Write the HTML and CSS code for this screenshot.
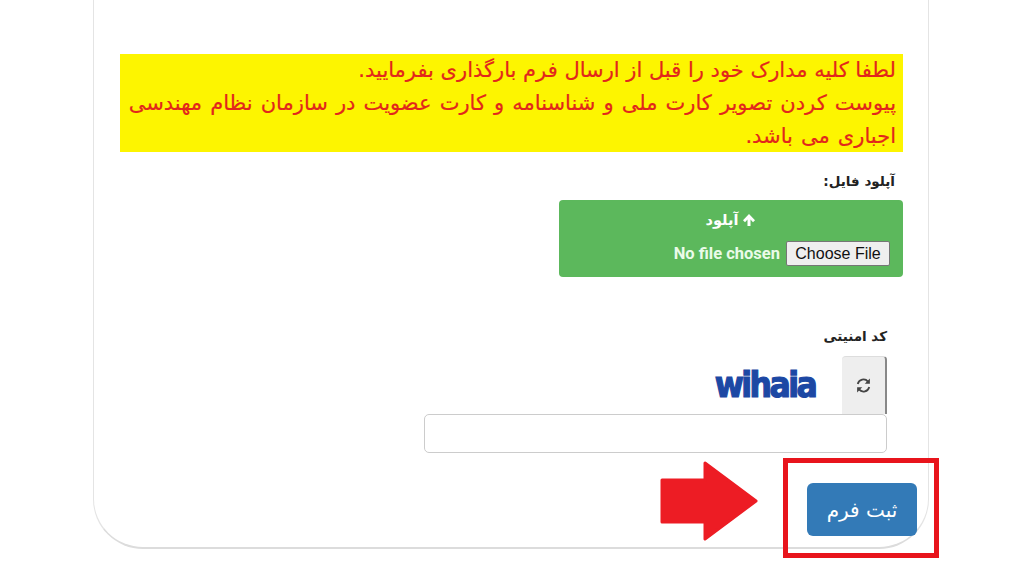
FILE: index.html
```html
<!DOCTYPE html>
<html lang="fa" dir="rtl">
<head>
<meta charset="utf-8">
<title>فرم</title>
<link rel="stylesheet" href="styles.css">
</head>
<body>
<main class="card">
  <p class="notice"><span class="notice-first">لطفا کلیه مدارک خود را قبل از ارسال فرم بارگذاری بفرمایید.</span><br><span class="notice-second">پیوست کردن تصویر کارت ملی و شناسنامه و کارت عضویت در سازمان نظام مهندسی اجباری می باشد.</span></p>
  <label class="label upload-label">آپلود فایل:</label>
  <div class="upload">
    <div class="upload-title"><svg class="up" viewBox="0 0 14 14"><path d="M7 1 13 7.2 11 9.2 8.5 6.6V13h-3V6.600L3 9.2 1 7.2Z"/></svg><span>آپلود</span></div>
    <div class="upload-row" dir="ltr"><span class="nofile">No file chosen</span><button class="choose" type="button">Choose File</button></div>
  </div>
  <div class="captcha-block">
    <label class="label captcha-label">کد امنیتی</label>
    <div class="captcha-row">
      <button class="refresh" type="button" aria-label="refresh"><svg viewBox="0 0 16 16"><g fill="none" stroke="#444" stroke-width="1.7"><path d="M2.6 6.6A5.5 5.5 0 0 1 12.2 4.3"/><path d="M13.4 9.4A5.5 5.5 0 0 1 3.8 11.700"/></g><path d="M14 1.500V6.300H9.200Z" fill="#444"/><path d="M2 14.500V9.700H6.800Z" fill="#444"/></svg></button>
      <div class="captcha-img" dir="ltr">wihaia</div>
    </div>
    <input class="captcha-input" type="text">
  </div>
  <div class="actions"><button class="submit" type="button">ثبت فرم</button></div>
</main>
<svg class="arrow" viewBox="0 0 100 82"><path d="M3 20H46V3L97 41 46 79V62H3Z" fill="#ed1c24" stroke="#ed1c24" stroke-width="3" stroke-linejoin="round"/></svg>
<div class="highlight"></div>
</body>
</html>
```
FILE: styles.css
```css
* { box-sizing: border-box; }
html, body { margin: 0; height: 573px; overflow: hidden; background: #fff; }
body { position: relative; font-family: "DejaVu Sans", sans-serif; }
.card {
  width: 836px;
  height: 549px;
  margin-right: 95px;
  padding: 54px 25px 0 26px;
  background: #fff;
  border: 1px solid #e4e4e4;
  border-top: 0;
  border-bottom: 2px solid #dcdcdc;
  border-radius: 0 0 50px 50px;
}
.notice {
  margin: 0;
  height: 98px;
  padding: 0 7px 0 4px;
  background: #fdf500;
  color: #e2261c;
  font-size: 21px;
  line-height: 33px;
  -webkit-text-stroke: 0.2px #e2261c;
}
.notice-first { word-spacing: 0; }
.notice-second { word-spacing: 1.4px; }
.label { display: block; color: #222; font-weight: 700; font-size: 13.5px; line-height: 18px; }
.upload-label { margin: 20px 8px 0 0; }
.upload {
  width: 344px;
  height: 77px;
  margin-top: 10px;
  padding-top: 10px;
  background: #5cb85c;
  border-radius: 4px;
  color: #fff;
  font-weight: 700;
}
.upload-title { display: flex; justify-content: center; align-items: center; gap: 4px; font-size: 14.5px; line-height: 20px; }
.up { width: 14px; height: 14px; fill: #fff; }
.upload-row { display: flex; justify-content: flex-end; align-items: center; gap: 6px; margin-top: 11px; padding-right: 13px; }
.nofile { font-family: "Roboto", "Liberation Sans", sans-serif; font-size: 16.5px; font-weight: 700; color: #eafbe9; }
.choose {
  width: 104px;
  height: 25px;
  padding: 0;
  background: #efefef;
  border: 1px solid #767676;
  border-radius: 2px;
  color: #111;
  font-family: "Liberation Sans", sans-serif;
  font-size: 16px;
}
.captcha-block { width: 463px; margin: 50px 16px 0 0; }
.captcha-label { height: 29px; }
.captcha-row { display: flex; height: 58px; }
.refresh {
  width: 45px;
  height: 58px;
  padding: 0;
  background: #eee;
  border: 0;
  border-right: 2px solid #888;
  border-top: 1px solid #ddd;
  border-radius: 4px 4px 0 0;
}
.refresh svg { width: 17px; height: 17px; display: block; margin: 0 auto; }
.captcha-img {
  width: 104px;
  margin-right: 25px;
  margin-top: 6px;
  color: #1c48a4;
  font-family: "DejaVu Sans Condensed", "DejaVu Sans", sans-serif;
  font-size: 35px;
  font-weight: 700;
  letter-spacing: -2.5px;
  line-height: 46px;
  text-align: center;
  -webkit-text-stroke: 1.2px #1c48a4;
}
.captcha-input {
  display: block;
  width: 463px;
  height: 39px;
  background: #fff;
  border: 1px solid #ccc;
  border-radius: 5px;
}
.actions { display: flex; margin-top: 30px; margin-right: -14px; }
.submit {
  width: 110px;
  height: 53px;
  padding: 0;
  background: #337ab7;
  border: 0;
  border-radius: 6px;
  color: #fff;
  font-family: "DejaVu Sans", sans-serif;
  font-size: 20px;
}
.arrow { position: absolute; left: 659px; top: 460px; width: 100px; height: 82px; }
.highlight { position: absolute; left: 783px; top: 458px; width: 156px; height: 100px; border: 5px solid #e8141c; }
```
